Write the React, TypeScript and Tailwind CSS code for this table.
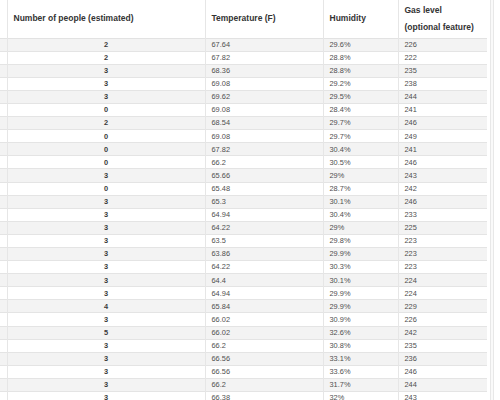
import React from 'react';

const rows: [string, string, string, string][] = [
  ['2', '67.64', '29.6%', '226'],
  ['2', '67.82', '28.8%', '222'],
  ['3', '68.36', '28.8%', '235'],
  ['3', '69.08', '29.2%', '238'],
  ['3', '69.62', '29.5%', '244'],
  ['0', '69.08', '28.4%', '241'],
  ['2', '68.54', '29.7%', '246'],
  ['0', '69.08', '29.7%', '249'],
  ['0', '67.82', '30.4%', '241'],
  ['0', '66.2', '30.5%', '246'],
  ['3', '65.66', '29%', '243'],
  ['0', '65.48', '28.7%', '242'],
  ['3', '65.3', '30.1%', '246'],
  ['3', '64.94', '30.4%', '233'],
  ['3', '64.22', '29%', '225'],
  ['3', '63.5', '29.8%', '223'],
  ['3', '63.86', '29.9%', '223'],
  ['3', '64.22', '30.3%', '223'],
  ['3', '64.4', '30.1%', '224'],
  ['3', '64.94', '29.9%', '224'],
  ['4', '65.84', '29.9%', '229'],
  ['3', '66.02', '30.9%', '226'],
  ['5', '66.02', '32.6%', '242'],
  ['3', '66.2', '30.8%', '235'],
  ['3', '66.56', '33.1%', '236'],
  ['3', '66.56', '33.6%', '246'],
  ['3', '66.2', '31.7%', '244'],
  ['3', '66.38', '32%', '243'],
];

export default function App() {
  return (
    <div className="w-[500px] h-[400px] overflow-hidden bg-white flex font-['Liberation_Sans',Arial,sans-serif]">
      <div className="w-[490px] shrink-0">
        <table className="table-fixed border-collapse w-[487px]">
          <colgroup>
            <col className="w-[7px]" />
            <col className="w-[198px]" />
            <col className="w-[118px]" />
            <col className="w-[75px]" />
            <col className="w-[89px]" />
          </colgroup>
          <thead>
            <tr className="h-[38px] text-[8.5px] font-bold text-[#333] text-left border-b border-[#e2e2e2]">
              <th className="border-r border-[#e6e6e6] p-0"></th>
              <th className="border-r border-[#e6e6e6] px-[6px] font-bold">Number of people (estimated)</th>
              <th className="border-r border-[#e6e6e6] px-[6px] font-bold">Temperature (F)</th>
              <th className="border-r border-[#e6e6e6] px-[6px] font-bold">Humidity</th>
              <th className="px-[6px] font-bold leading-[17px]">
                Gas level
                <br />
                (optional feature)
              </th>
            </tr>
          </thead>
          <tbody>
            {rows.map((r, i) => (
              <tr
                key={i}
                className={`h-[13.1px] text-[7.4px] leading-none text-[#4f4f4f] border-b border-[#e4e4e4] ${
                  i % 2 === 0 ? 'bg-[#f3f3f3]' : 'bg-white'
                }`}
              >
                <td className="border-r border-[#e6e6e6] p-0"></td>
                <td className="border-r border-[#e6e6e6] p-0 text-center font-bold text-[#3a3a3a]">{r[0]}</td>
                <td className="border-r border-[#e6e6e6] px-[6px] py-0">{r[1]}</td>
                <td className="border-r border-[#e6e6e6] px-[6px] py-0">{r[2]}</td>
                <td className="px-[6px] py-0">{r[3]}</td>
              </tr>
            ))}
          </tbody>
        </table>
      </div>
      <div className="w-[4px] shrink-0 border-l border-r border-[#e8e8e8] bg-[#fafafa]"></div>
      <div className="flex-1 bg-white"></div>
    </div>
  );
}
